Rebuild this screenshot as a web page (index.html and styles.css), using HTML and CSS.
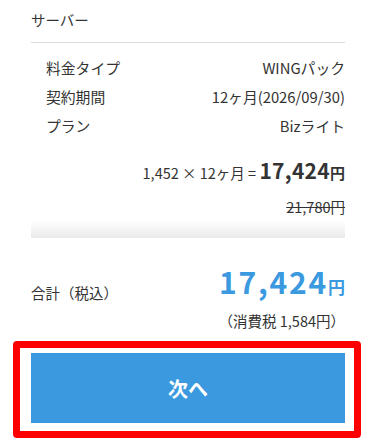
FILE: index.html
```html
<!DOCTYPE html>
<html lang="ja">
<head>
<meta charset="utf-8">
<link rel="stylesheet" href="styles.css">
</head>
<body>
<div class="page">
  <div class="title">サーバー</div>
  <div class="details">
    <div class="row"><span>料金タイプ</span><span>WINGパック</span></div>
    <div class="row"><span>契約期間</span><span>12ヶ月(2026/09/30)</span></div>
    <div class="row"><span>プラン</span><span>Bizライト</span></div>
  </div>
  <div class="calc">1,452 × 12ヶ月 = <strong class="calc-sum">17,424</strong><span class="yen">円</span></div>
  <div class="strike"><s>21,780円</s></div>
  <div class="fade"></div>
  <div class="total">
    <span class="total-label">合計（税込）</span>
    <span class="total-value"><strong class="total-num">17,424</strong><span class="total-yen">円</span></span>
  </div>
  <div class="tax">（消費税 1,584円）</div>
  <div class="btn-wrap">
    <button class="btn">次へ</button>
    <div class="highlight"></div>
  </div>
</div>
</body>
</html>
```
FILE: styles.css
```css
* { box-sizing: border-box; }
html, body { margin: 0; padding: 0; background: #fff; }
body {
  font-family: "Noto Sans CJK JP", "Noto Sans", sans-serif;
  color: #333;
  font-size: 14.5px;
  width: 376px;
  height: 448px;
  overflow: hidden;
}
.page { padding: 0 31px; }
.title {
  height: 43px;
  padding-top: 9px;
  line-height: 22px;
  font-size: 14.5px;
  border-bottom: 1px solid #dcdcdc;
}
.details { padding: 10px 0 0 15px; }
.row {
  display: flex;
  justify-content: space-between;
  line-height: 29px;
  font-size: 14.8px;
}
.calc {
  margin-top: 14px;
  text-align: right;
  line-height: 32px;
  font-size: 14.5px;
}
.calc-sum { font-size: 21px; font-weight: 700; letter-spacing: 0.3px; }
.yen { font-size: 15px; font-weight: 700; }
.strike {
  text-align: right;
  line-height: 24px;
  margin-top: 6px;
  font-size: 14.5px;
}
.fade {
  margin-top: 1px;
  height: 18px;
  background: linear-gradient(to bottom, #ffffff, #eaeaea);
}
.total {
  margin-top: 25px;
  display: flex;
  justify-content: space-between;
  align-items: flex-end;
}
.total-label { font-size: 14.5px; line-height: 24px; padding-bottom: 1px; }
.total-value { color: #3b99e0; line-height: 36px; }
.total-num { font-size: 30px; font-weight: 700; letter-spacing: 1.8px; }
.total-yen { font-size: 17px; font-weight: 700; }
.tax {
  text-align: right;
  font-size: 14.5px;
  line-height: 24px;
  margin-top: 3px;
  margin-right: 0;
}
.btn-wrap {
  position: relative;
  margin-top: 20px;
}
.btn {
  display: block;
  width: 100%;
  height: 70px;
  border: none;
  border-radius: 0;
  background: #3b99e0;
  color: #fff;
  font-family: inherit;
  font-size: 20px;
  font-weight: 700;
  padding: 0;
}
.highlight {
  position: absolute;
  left: -18px;
  top: -12px;
  right: -16px;
  bottom: -15px;
  border: 7px solid #ff0000;
  border-radius: 4px;
  pointer-events: none;
}
```
